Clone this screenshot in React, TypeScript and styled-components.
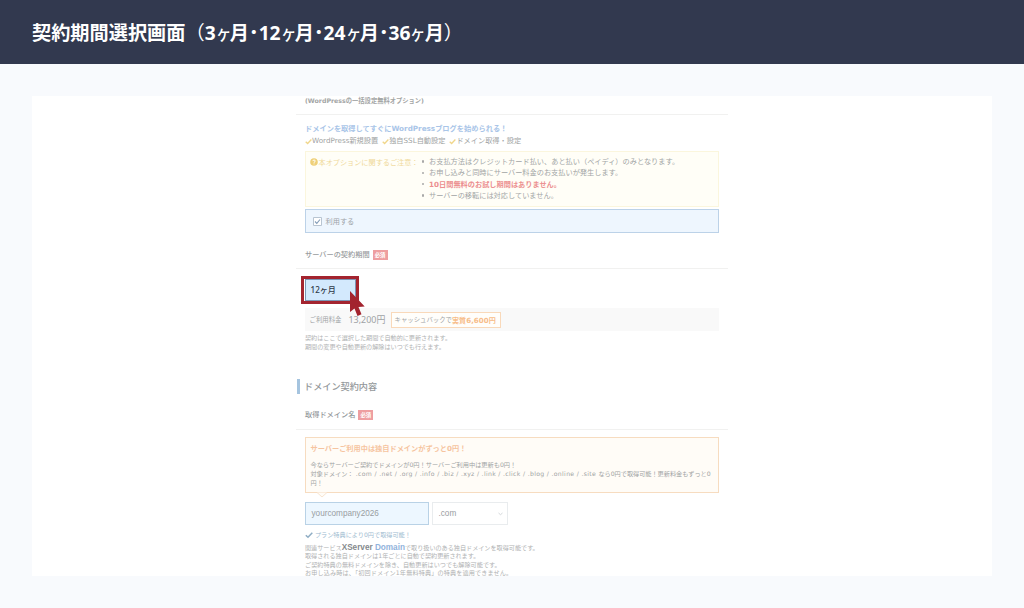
import React from "react";
import styled, { createGlobalStyle } from "styled-components";

const Global = createGlobalStyle`
  * { box-sizing: border-box; }
  body { margin: 0; background: #f8fafd; font-family: "DejaVu Sans", "Noto Sans CJK JP", sans-serif; }
`;

const Page = styled.div`
  width: 1024px;
  height: 608px;
  overflow: hidden;
  background: #f8fafd;
`;

const Header = styled.header`
  height: 64px;
  padding: 2px 32px 0;
  display: flex;
  align-items: center;
  background: #32394f;
`;

const Title = styled.h1`
  margin: 0;
  color: #fff;
  font: 700 19.2px/28px "Noto Sans", "Noto Sans CJK JP", sans-serif;
  white-space: nowrap;
`;

const Kana = styled.span`
  display: inline-block;
  width: 14.2px;
  line-height: 20px;
  font-size: 17.8px;
  font-weight: 500;
  transform: scaleX(0.86);
  transform-origin: 0 50%;
`;

const Paren = styled.span`
  font-weight: 400;
`;

const Dot = styled.span`
  font-weight: 900;
`;

const Panel = styled.main`
  margin: 32px 32px 0;
  height: 479.5px;
  overflow: hidden;
  background: #fff;
  display: flex;
  padding-left: 264px;
`;

const Form = styled.div`
  width: 432px;
  display: flex;
  flex-direction: column;
  > * { flex-shrink: 0; }
`;

const Section = styled.section<{ $top?: number }>`
  padding: 0 9px;
  margin-top: ${(p) => p.$top ?? 0}px;
  display: flex;
  flex-direction: column;
`;

const Rule = styled.hr<{ $top: number }>`
  width: 432px;
  margin: ${(p) => p.$top}px 0 0;
  border: 0;
  height: 1px;
  background: #f1f1f0;
`;

interface TextProps {
  $size?: number;
  $line?: number;
  $top?: number;
  $color?: string;
  $weight?: number;
  $track?: number;
}

const Text = styled.div<TextProps>`
  margin-top: ${(p) => p.$top ?? 0}px;
  font-size: ${(p) => p.$size ?? 7.2}px;
  line-height: ${(p) => p.$line ?? 12}px;
  height: ${(p) => p.$line ?? 12}px;
  color: ${(p) => p.$color ?? "#a0a3a3"};
  font-weight: ${(p) => p.$weight ?? 400};
  letter-spacing: ${(p) => p.$track ?? 0}px;
  white-space: nowrap;
  display: flex;
  align-items: center;
`;

const Note = styled(Text).attrs({ $size: 6.12, $line: 8.6, $color: "#b0b2b3" })``;

const Perk = styled.span`
  display: inline-flex;
  align-items: center;
  margin-right: 4px;
`;

const NoticeBox = styled.div`
  margin-top: 4px;
  height: 56px;
  padding: 4px 4px 0 3.5px;
  border: 1px solid #fbf6dd;
  background: #fffef7;
  display: flex;
`;

const NoticeTitle = styled.div`
  width: 112px;
  height: 12px;
  display: flex;
  align-items: center;
  gap: 1px;
  font-size: 7.15px;
  white-space: nowrap;
  color: #efd99a;
`;

const Bullets = styled.ul`
  margin: 0;
  padding: 0;
  list-style: none;
`;

const Bullet = styled.li<{ $alert?: boolean }>`
  display: flex;
  align-items: center;
  gap: 5px;
  height: 11.3px;
  font-size: 7.2px;
  line-height: 11.3px;
  white-space: nowrap;
  color: ${(p) => (p.$alert ? "#ec8f8f" : "#a2a5a5")};
  font-weight: ${(p) => (p.$alert ? 700 : 400)};
  &::before {
    content: "";
    width: 2.5px;
    height: 2.5px;
    border-radius: 50%;
    background: #a8a8a8;
  }
`;

const UseRow = styled.label`
  margin-top: 2px;
  height: 24px;
  padding-left: 7px;
  display: flex;
  align-items: center;
  gap: 3.5px;
  border: 1px solid #bcd2e8;
  background: #eef6fe;
  font-size: 7.2px;
  color: #9da3a8;
`;

const Badge = styled.span`
  width: 15px;
  height: 10px;
  margin-left: 3px;
  background: #ee9ea0;
  color: #fff;
  font-size: 5.4px;
  font-weight: 700;
  line-height: 10px;
  text-align: center;
`;

const TermFrame = styled.div`
  position: relative;
  width: 58px;
  height: 28px;
  margin: 7px 0 0 5px;
  border: 3px solid #a3242f;
  padding: 0 0 0 1px;
  display: flex;
`;

const Term = styled.div`
  flex: 1;
  padding: 0 0 2px 4.5px;
  display: flex;
  align-items: center;
  border: 1px solid #7b95b4;
  background: #d3e9fd;
  color: #303a47;
  font: 500 8.1px "Noto Sans", "Noto Sans CJK JP", sans-serif;
  white-space: nowrap;
`;

const Cursor = styled.svg`
  position: absolute;
  left: 44.5px;
  top: 12px;
`;

const PriceRow = styled.div`
  height: 23px;
  padding-left: 4.5px;
  display: flex;
  align-items: center;
  background: #f9f9f9;
  white-space: nowrap;
  color: #a0a3a5;
`;

const PriceLabel = styled.span`
  width: 39px;
  font-size: 6.4px;
`;

const Price = styled.span`
  width: 42px;
  padding-bottom: 1px;
  font: 8.95px "Noto Sans", "Noto Sans CJK JP", sans-serif;
`;

const Cashback = styled.span`
  width: 110px;
  height: 16px;
  padding-left: 3px;
  display: flex;
  align-items: center;
  border: 1px solid #f9d9ba;
  background: #fffefb;
  font-size: 6.4px;
`;

const Orange = styled.b`
  color: #f7bd8a;
  font-size: 7.1px;
`;

const Heading = styled.h2`
  margin: 28px 0 0 1px;
  height: 15px;
  padding-left: 4px;
  border-left: 3px solid #a5c4df;
  color: #93979a;
  font-size: 9.15px;
  font-weight: 500;
  line-height: 16px;
`;

const PromoBox = styled.div`
  position: relative;
  height: 56px;
  padding: 4.5px 0 0 4.5px;
  border: 1px solid #f7dcc0;
  background: #fffcf7;
`;

const Domains = styled.span`
  letter-spacing: 0.33px;
  white-space: pre;
`;

const Pointer = styled.svg`
  position: absolute;
  left: 10px;
  top: 53.5px;
`;

const Fields = styled.div`
  margin-top: 9px;
  display: flex;
  gap: 3px;
`;

const Field = styled.div<{ $width: number; $active?: boolean }>`
  width: ${(p) => p.$width}px;
  height: 23px;
  padding: 0 4px 0 5.5px;
  display: flex;
  align-items: center;
  justify-content: space-between;
  border: 1px solid ${(p) => (p.$active ? "#b9d2e6" : "#e9ecee")};
  background: ${(p) => (p.$active ? "#edf7ff" : "#fff")};
  color: #999da1;
  font: 8.2px "Liberation Sans", sans-serif;
`;

const Brand = styled.b`
  font: 700 8.2px "Liberation Sans", sans-serif;
  color: #85898d;
  white-space: pre;
  i { font-style: normal; color: #91b3dc; }
`;

const Check = ({ color, size = 7 }: { color: string; size?: number }) => (
  <svg width={size} height={size} viewBox="0 0 8 8" fill="none" stroke={color} strokeWidth="1.5">
    <path d="M.8 4.2 3 6.3 7.3 1.7" />
  </svg>
);

export default function App() {
  return (
    <Page>
      <Global />
      <Header>
        <Title>
          契約期間選択画面<Paren>（</Paren>3<Kana>ヶ</Kana>月<Dot>･</Dot>12<Kana>ヶ</Kana>月<Dot>･</Dot>24
          <Kana>ヶ</Kana>月<Dot>･</Dot>36<Kana>ヶ</Kana>月<Paren>）</Paren>
        </Title>
      </Header>
      <Panel>
        <Form>
          <Section>
            <Text $size={6.28} $line={10} $weight={700} $color="#a3a5a5">(WordPressの一括設定無料オプション)</Text>
          </Section>
          <Rule $top={8} />
          <Section $top={8}>
            <Text $size={7.23} $weight={700} $color="#a9c5e8">ドメインを取得してすぐにWordPressブログを始められる！</Text>
            <Text>
              <Perk><Check color="#f0d68a" />WordPress新規設置</Perk>
              <Perk><Check color="#f0d68a" />独自SSL自動設定</Perk>
              <Perk><Check color="#f0d68a" />ドメイン取得・設定</Perk>
            </Text>
            <NoticeBox>
              <NoticeTitle>
                <svg width="8" height="8" viewBox="0 0 8 8">
                  <circle cx="4" cy="4" r="3.8" fill="#efd078" />
                  <path d="M2.8 3.1Q3 2 4.1 2T5.2 3.1Q5.2 3.8 4 4.3V4.8M4 5.5V6.3" fill="none" stroke="#fff" />
                </svg>
                本オプションに関するご注意：
              </NoticeTitle>
              <Bullets>
                <Bullet>お支払方法はクレジットカード払い、あと払い（ペイディ）のみとなります。</Bullet>
                <Bullet>お申し込みと同時にサーバー料金のお支払いが発生します。</Bullet>
                <Bullet $alert>10日間無料のお試し期間はありません。</Bullet>
                <Bullet>サーバーの移転には対応していません。</Bullet>
              </Bullets>
            </NoticeBox>
            <UseRow>
              <svg width="9" height="9" viewBox="0 0 9 9" fill="none">
                <path d="M.5.5h8v8h-8z" fill="#fff" stroke="#b8c5d2" />
                <path d="M2 4.5 3.8 6.4 7 2.5" stroke="#849eba" strokeWidth="1.1" />
              </svg>
              利用する
            </UseRow>
            <Text $top={15} $line={14} $weight={500} $color="#999c9e">サーバーの契約期間<Badge>必須</Badge></Text>
          </Section>
          <Rule $top={6} />
          <TermFrame>
            <Term>12ヶ月</Term>
            <Cursor width="17" height="26" viewBox="0 0 17 26">
              <path d="M1 0V21L5.5 17.5 8.5 25 12.5 23.3 9.5 16 15.7 15.5Z" fill="#a3242f" />
            </Cursor>
          </TermFrame>
          <Section $top={4}>
            <PriceRow>
              <PriceLabel>ご利用料金</PriceLabel>
              <Price>13,200円</Price>
              <Cashback>キャッシュバックで<Orange>実質6,600円</Orange></Cashback>
            </PriceRow>
            <Note $top={3}>契約はここで選択した期間で自動的に更新されます。</Note>
            <Note>期間の変更や自動更新の解除はいつでも行えます。</Note>
          </Section>
          <Heading>ドメイン契約内容</Heading>
          <Section $top={14}>
            <Text $line={14} $weight={500} $color="#93979a">取得ドメイン名<Badge>必須</Badge></Text>
          </Section>
          <Rule $top={7} />
          <Section $top={7}>
            <PromoBox>
              <Text $weight={700} $color="#f6c4a0">サーバーご利用中は独自ドメインがずっと0円！</Text>
              <Text $top={5} $size={6.2} $line={9.2}>今ならサーバーご契約でドメインが0円！サーバーご利用中は更新も0円！</Text>
              <Text $size={6.15} $line={9.2}>
                対象ドメイン：
                <Domains> .com / .net / .org / .info / .biz / .xyz / .link / .click / .blog / .online / .site </Domains>
                なら0円で取得可能！更新料金もずっと0
              </Text>
              <Text $size={6.15} $line={9.2}>円！</Text>
              <Pointer width="12" height="6" viewBox="0 0 12 6">
                <path d="M1 .5 6 5 11 .5" fill="#fffcf7" stroke="#f7e4d0" />
              </Pointer>
            </PromoBox>
            <Fields>
              <Field $width={124} $active>yourcompany2026</Field>
              <Field $width={76}>
                .com
                <svg width="5" height="4" viewBox="0 0 5 4" fill="none" stroke="#d3d7da"><path d="M.5 1 2.5 2.7 4.5 1" /></svg>
              </Field>
            </Fields>
            <Text $top={5} $size={6.15} $line={10} $color="#a0bbd0">
              <Check color="#8fadc4" size={8} />&nbsp;プラン特典により0円で取得可能！
            </Text>
            <Note $top={3.5}>
              関連サービス<Brand>XServer <i>Domain</i></Brand>で取り扱いのある独自ドメインを取得可能です。
            </Note>
            <Note>取得される独自ドメインは1年ごとに自動で契約更新されます。</Note>
            <Note $track={0.04}>ご契約特典の無料ドメインを除き、自動更新はいつでも解除可能です。</Note>
            <Note $track={0.15}>お申し込み時は、「初回ドメイン1年無料特典」の特典を適用できません。</Note>
          </Section>
        </Form>
      </Panel>
    </Page>
  );
}
